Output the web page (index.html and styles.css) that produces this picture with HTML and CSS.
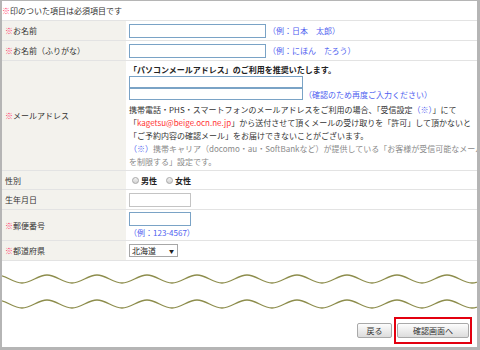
FILE: index.html
```html
<!DOCTYPE html>
<html lang="ja">
<head>
<meta charset="utf-8">
<title>予約フォーム</title>
<link rel="stylesheet" href="styles.css">
</head>
<body>
<div class="frame">
  <p class="note"><span class="req">※</span>印のついた項目は必須項目です</p>
  <div class="form">
    <div class="row">
      <div class="label"><span class="req">※</span>お名前</div>
      <div class="value"><input class="text name blue-border" type="text"><span class="ex">（例：日本　太郎）</span></div>
    </div>
    <div class="row">
      <div class="label"><span class="req">※</span>お名前（ふりがな）</div>
      <div class="value"><input class="text name blue-border" type="text"><span class="ex">（例：にほん　たろう）</span></div>
    </div>
    <div class="row">
      <div class="label"><span class="req">※</span>メールアドレス</div>
      <div class="value mail">
        <p class="lead">「パソコンメールアドレス」のご利用を推奨いたします。</p>
        <input class="text mailbox blue-border" type="text">
        <div class="mail2"><input class="text mailbox blue-border" type="text"><span class="ex">（確認のため再度ご入力ください）</span></div>
        <p class="mailnote">携帯電話・PHS・スマートフォンのメールアドレスをご利用の場合、「受信設定<span class="blue">（※）</span>」にて<br>「<span class="red">kagetsu@beige.ocn.ne.jp</span>」から送付させて頂くメールの受け取りを「許可」して頂かないと<br>「ご予約内容の確認メール」をお届けできないことがございます。<br><span class="gray"><span class="blue">（※）</span>携帯キャリア（docomo・au・SoftBankなど）が提供している「お客様が受信可能なメール<br>を制限する」設定です。</span></p>
      </div>
    </div>
    <div class="row">
      <div class="label">性別</div>
      <div class="value radios">
        <span class="radio"></span><b>男性</b>
        <span class="radio"></span><b>女性</b>
      </div>
    </div>
    <div class="row">
      <div class="label">生年月日</div>
      <div class="value"><input class="text short gray-border" type="text"></div>
    </div>
    <div class="row">
      <div class="label"><span class="req">※</span>郵便番号</div>
      <div class="value zip">
        <input class="text short blue-border" type="text">
        <span class="ex">（例：123-4567）</span>
      </div>
    </div>
    <div class="row">
      <div class="label"><span class="req">※</span>都道府県</div>
      <div class="value"><div class="select"><span>北海道</span><span class="arrow">▼</span></div></div>
    </div>
  </div>
  <svg class="waves" width="475" height="42" viewBox="0 0 475 42">
    <path class="wave" d="M-5 3 C4 3 11 11 20 11 S36 3 45 3 S61 11 70 11 S86 3 95 3 S111 11 120 11 S136 3 145 3 S161 11 170 11 S186 3 195 3 S211 11 220 11 S236 3 245 3 S261 11 270 11 S286 3 295 3 S311 11 320 11 S336 3 345 3 S361 11 370 11 S386 3 395 3 S411 11 420 11 S436 3 445 3 S461 11 470 11 S486 3 495 3"/>
    <path class="wave" d="M-5 28 C4 28 11 36 20 36 S36 28 45 28 S61 36 70 36 S86 28 95 28 S111 36 120 36 S136 28 145 28 S161 36 170 36 S186 28 195 28 S211 36 220 36 S236 28 245 28 S261 36 270 36 S286 28 295 28 S311 36 320 36 S336 28 345 28 S361 36 370 36 S386 28 395 28 S411 36 420 36 S436 28 445 28 S461 36 470 36 S486 28 495 28"/>
  </svg>
  <div class="actions">
    <button class="btn back" type="button">戻る</button>
    <span class="highlight"><button class="btn next" type="button">確認画面へ</button></span>
  </div>
</div>
</body>
</html>
```
FILE: styles.css
```css
* { box-sizing: border-box; }
body {
  margin: 0;
  font-family: "Noto Sans CJK JP", "Noto Sans", sans-serif;
  font-size: 8px;
  color: #333;
  background: #fff;
}
.frame {
  width: 480px;
  height: 350px;
  border: solid #b5b5b5;
  border-width: 1px 3px 3px 2px;
  overflow: hidden;
  background: #fff;
  display: flex;
  flex-direction: column;
}
.note {
  margin: 0;
  height: 20px;
  line-height: 19px;
  border-bottom: 1px solid #e3e3e3;
  flex: none;
}
.req { color: #f36; }
.form { flex: none; }
.row {
  display: grid;
  grid-template-columns: 124px minmax(0, 1fr);
  border-bottom: 1px solid #e3e3e3;
}
.label {
  background: #f3f2ed;
  padding-left: 3px;
  display: flex;
  align-items: center;
  white-space: nowrap;
}
.value {
  min-height: 19px;
  padding: 0 3px;
  display: flex;
  align-items: center;
  white-space: nowrap;
}
.text {
  display: block;
  margin: 0;
  padding: 0;
  background: #fff;
  font: inherit;
  border-radius: 0;
}
.blue-border { border: 1px solid #7aa3c6; }
.gray-border { border: 1px solid #c4c4c4; }
.name { width: 137px; height: 14px; }
.short { width: 62px; height: 14px; }
.mailbox { width: 174px; height: 12px; }
.ex { color: #4f5ff0; margin-left: 2px; }
.mail {
  display: block;
  padding: 2px 3px 2px;
}
.lead {
  margin: 0;
  line-height: 13px;
  font-weight: bold;
  color: #222;
}
.mail2 { display: flex; align-items: center; }
.mail2 .ex { margin-left: 1px; }
.mailnote {
  margin: 3px 0 0;
  line-height: 13px;
}
.blue { color: #4f5ff0; }
.red { color: #f33; }
.gray { color: #8a8a8a; }
.radios { min-height: 18px; }
.radio {
  display: inline-block;
  width: 7px;
  height: 7px;
  border: 1px solid #a8a8a8;
  border-radius: 50%;
  background: linear-gradient(#f2f2f2, #d2d2d2);
  margin: 0 2px 0 3px;
}
.radios b { color: #222; margin-right: 6px; }
.zip {
  display: block;
  padding: 2px 3px 1px;
}
.zip .ex { display: block; margin-left: 0; line-height: 13px; }
.select {
  width: 49px;
  height: 13px;
  border: 1px solid #a7a7a7;
  background: #fff;
  display: flex;
  align-items: center;
  justify-content: space-between;
  padding: 0 3px 0 2px;
  color: #222;
}
.arrow { font-size: 5px; }
.waves {
  display: block;
  margin-top: 11px;
  flex: none;
}
.wave {
  fill: none;
  stroke: #8d8d4c;
  stroke-width: 1.3;
}
.actions {
  display: flex;
  justify-content: flex-end;
  align-items: center;
  gap: 2px;
  padding-right: 5px;
  margin-top: 3px;
}
.highlight {
  display: flex;
  border: 2px solid #e3000f;
  padding: 4px 1px;
}
.btn {
  height: 15px;
  margin: 0;
  padding: 0;
  border: 1px solid #a9a9a9;
  border-radius: 2px;
  background: linear-gradient(#fdfdfd, #dcdcdc);
  font: inherit;
  color: #333;
}
.back { width: 35px; }
.next { width: 72px; }
```
